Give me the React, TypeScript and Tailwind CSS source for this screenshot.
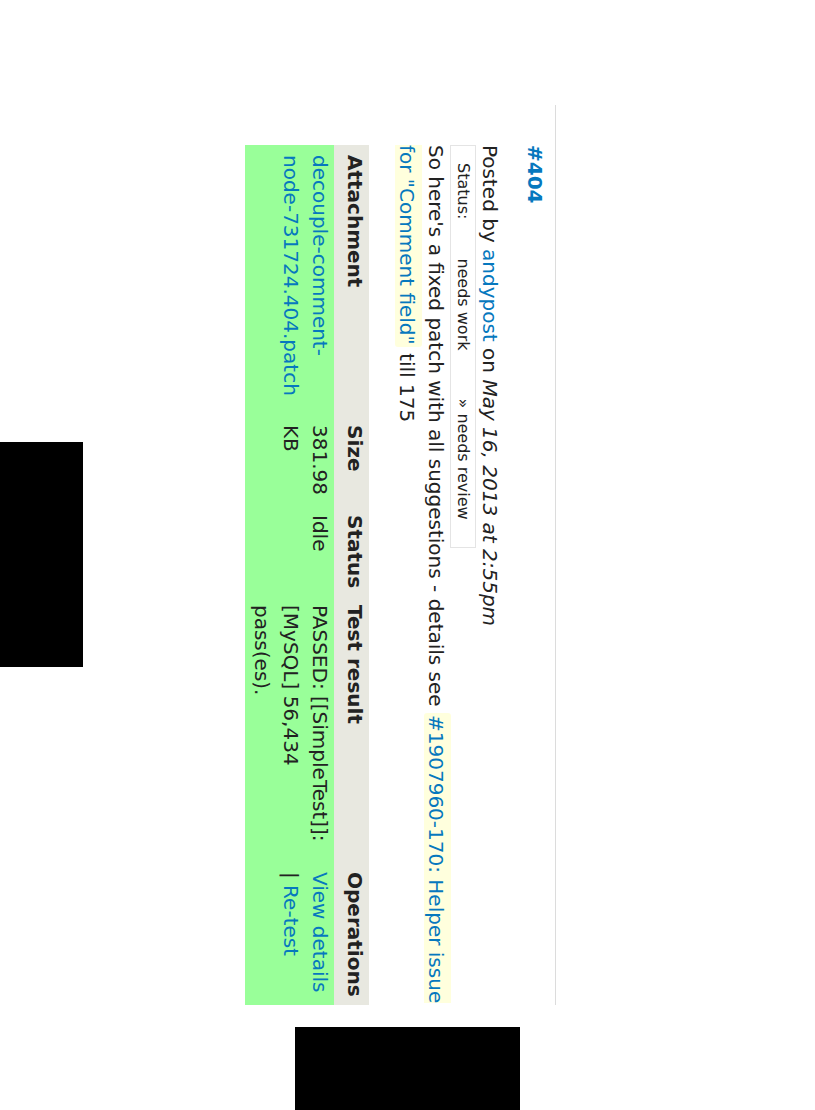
const link = "text-[#0678be]";

const cols = "grid grid-cols-[270px_90px_90px_267px_143px]";

function StatusChange() {
  return (
    <div className="flex h-[26px] w-[403px] border border-[#e4e4e4] text-[16px] leading-[24px]">
      <span className="ml-[17px]">Status:</span>
      <span className="ml-[39px]">needs work</span>
      <span className="ml-[48px]">» needs review</span>
    </div>
  );
}

function Attachments() {
  return (
    <div className="mt-[23px] w-[860px]">
      <div className={`${cols} bg-[#e8e8e0] pb-[6px] font-bold leading-[29px]`}>
        <div className="px-[10px]">Attachment</div>
        <div className="px-[10px]">Size</div>
        <div className="px-[10px]">Status</div>
        <div className="px-[10px]">Test result</div>
        <div className="px-[10px]">Operations</div>
      </div>
      <div className={`${cols} bg-[#99ff99] pb-[2px] leading-[29px]`}>
        <div className="px-[10px]">
          <a className={link}>
            decouple-comment-
            <br />
            node-731724.404.patch
          </a>
        </div>
        <div className="px-[10px]">
          381.98
          <br />
          KB
        </div>
        <div className="px-[10px]">Idle</div>
        <div className="px-[10px]">
          PASSED: [[SimpleTest]]:
          <br />
          [MySQL] 56,434
          <br />
          pass(es).
        </div>
        <div className="px-[10px]">
          <a className={link}>View details</a>
          <br />| <a className={link}>Re-test</a>
        </div>
      </div>
    </div>
  );
}

function Comment() {
  return (
    <div className="w-[900px] border-t border-[#dcdcdc] pl-[40px]">
      <h3 className="pt-[8px] text-[20px] font-bold leading-[24px] text-[#0678be]">
        #404
      </h3>
      <div className="mt-[19px] leading-[28px]">
        Posted by <a className={link}>andypost</a> on{" "}
        <em>May 16, 2013 at 2:55pm</em>
      </div>
      <StatusChange />
      <p className="w-[860px] leading-[29px]">
        {"So here's a fixed patch with all suggestions - details see "}
        <a className="rounded-[3px] bg-[#ffffdd] px-[2px] pt-[3px] text-[#0678be]">
          #1907960-170: Helper issue for "Comment field"
        </a>{" "}
        till 175
      </p>
      <Attachments />
    </div>
  );
}

export default function App() {
  return (
    <div className="relative h-[1110px] w-[815px] overflow-hidden bg-white">
      <div className="relative h-[815px] w-[1110px] origin-top-left translate-x-[815px] rotate-90 bg-white pl-[105px] pt-[259px] font-['DejaVu_Sans',sans-serif] text-[20px] text-[#222]">
        <Comment />
        <div className="absolute left-[442px] top-[732px] h-[83px] w-[225px] bg-black" />
        <div className="absolute left-[1027px] top-[295px] h-[225px] w-[83px] bg-black" />
      </div>
    </div>
  );
}
